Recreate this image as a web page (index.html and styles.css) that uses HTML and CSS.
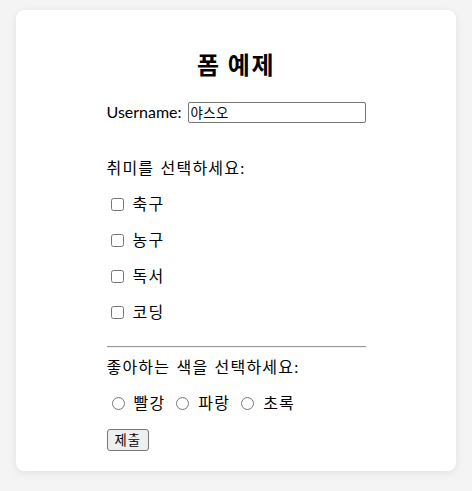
FILE: index.html
```html
<!DOCTYPE html>
<html lang="ko">
<head>
<meta charset="utf-8">
<title>폼 예제</title>
<link rel="stylesheet" href="styles.css">
</head>
<body>
<div class="card">
  <h2 class="title">폼 예제</h2>
  <form class="form">
    <div class="user-row">
      <label class="user-label" for="username">Username:</label>
      <input class="text-input" id="username" type="text" value="야스오">
    </div>
    <p class="group-label first">취미를 선택하세요:</p>
    <label class="opt"><input type="checkbox" class="check">축구</label>
    <label class="opt"><input type="checkbox" class="check">농구</label>
    <label class="opt"><input type="checkbox" class="check">독서</label>
    <label class="opt"><input type="checkbox" class="check">코딩</label>
    <hr class="divider">
    <p class="group-label">좋아하는 색을 선택하세요:</p>
    <div class="radios">
      <label class="ropt"><input type="radio" name="color" class="radio">빨강</label>
      <label class="ropt"><input type="radio" name="color" class="radio">파랑</label>
      <label class="ropt"><input type="radio" name="color" class="radio">초록</label>
    </div>
    <div class="actions"><button type="submit" class="submit">제출</button></div>
  </form>
</div>
</body>
</html>
```

FILE: styles.css
```css
html, body {
  margin: 0;
  padding: 0;
}
body {
  background: #f4f4f4;
  font-family: Lato, "Noto Sans CJK KR", sans-serif;
  font-size: 16px;
  line-height: 20px;
  color: #000;
  padding: 10px 16px 20px;
  letter-spacing: 1.2px;
  word-spacing: 1px;
}
.card {
  background: #fff;
  border-radius: 8px;
  box-shadow: 0 2px 8px rgba(0, 0, 0, 0.08);
  padding: 40px 0 20px;
  height: 461px;
  box-sizing: border-box;
}
.title {
  margin: 0;
  font-size: 24px;
  line-height: 30px;
  font-weight: bold;
  text-align: center;
  letter-spacing: 1.5px;
  word-spacing: 0;
}
.form {
  width: 259px;
  margin: 21px auto 0;
  display: flex;
  flex-direction: column;
}
.user-row {
  display: flex;
  align-items: center;
  height: 22px;
}
.user-label {
  margin-right: 6px;
  white-space: nowrap;
  letter-spacing: 0;
  word-spacing: 0;
}
.text-input {
  flex: 1;
  min-width: 0;
  height: 21px;
  box-sizing: border-box;
  border: 1px solid #767676;
  border-radius: 2px;
  padding: 1px 2px;
  font-family: "Noto Sans CJK KR", sans-serif;
  font-size: 13.33px;
  letter-spacing: 0.5px;
  margin: 0;
}
.group-label {
  margin: 0;
  height: 20px;
  line-height: 20px;
  white-space: nowrap;
}
.group-label.first {
  margin-top: 35px;
}
.opt {
  display: flex;
  align-items: center;
  height: 20px;
  margin-top: 16px;
}
.check {
  width: 13px;
  height: 13px;
  margin: 0 9px 0 4px;
}
.divider {
  margin: 24px 0 0;
  border: 0;
  border-top: 1px solid #9a9a9a;
  border-bottom: 1px solid #eeeeee;
  height: 0;
}
.divider + .group-label {
  margin-top: 9px;
}
.radios {
  display: flex;
  align-items: center;
  height: 20px;
  margin-top: 16px;
}
.ropt {
  display: flex;
  align-items: center;
  margin-right: 6px;
}
.radio {
  width: 13px;
  height: 13px;
  margin: 0 9px 0 5px;
}
.actions {
  margin-top: 16px;
  display: flex;
}
.submit {
  height: 22px;
  padding: 1px 7px;
  border: 1px solid #767676;
  border-radius: 3px;
  background: #efefef;
  font-family: "Noto Sans CJK KR", sans-serif;
  font-size: 13.33px;
  letter-spacing: 1px;
  color: #000;
  margin: 0;
  line-height: 18px;
}
```
